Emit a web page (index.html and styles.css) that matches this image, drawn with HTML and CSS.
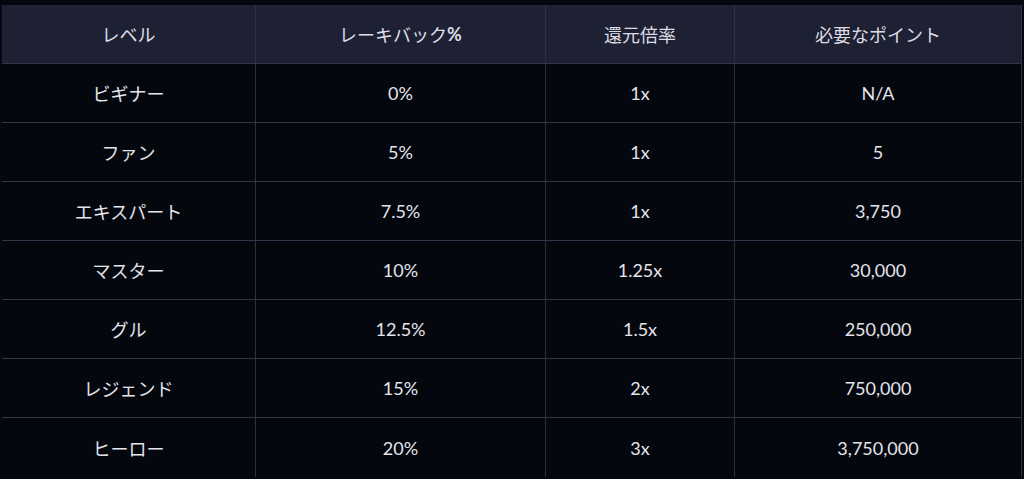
FILE: index.html
```html
<!DOCTYPE html>
<html lang="ja">
<head>
<meta charset="utf-8">
<link rel="stylesheet" href="styles.css">
</head>
<body>
<div class="table">
  <div class="row head">
    <div class="cell">レベル</div>
    <div class="cell">レーキバック<b class="pct">%</b></div>
    <div class="cell">還元倍率</div>
    <div class="cell">必要なポイント</div>
  </div>
  <div class="row">
    <div class="cell">ビギナー</div>
    <div class="cell">0%</div>
    <div class="cell">1x</div>
    <div class="cell">N/A</div>
  </div>
  <div class="row">
    <div class="cell">ファン</div>
    <div class="cell">5%</div>
    <div class="cell">1x</div>
    <div class="cell">5</div>
  </div>
  <div class="row">
    <div class="cell">エキスパート</div>
    <div class="cell">7.5%</div>
    <div class="cell">1x</div>
    <div class="cell">3,750</div>
  </div>
  <div class="row">
    <div class="cell">マスター</div>
    <div class="cell">10%</div>
    <div class="cell">1.25x</div>
    <div class="cell">30,000</div>
  </div>
  <div class="row">
    <div class="cell">グル</div>
    <div class="cell">12.5%</div>
    <div class="cell">1.5x</div>
    <div class="cell">250,000</div>
  </div>
  <div class="row">
    <div class="cell">レジェンド</div>
    <div class="cell">15%</div>
    <div class="cell">2x</div>
    <div class="cell">750,000</div>
  </div>
  <div class="row last">
    <div class="cell">ヒーロー</div>
    <div class="cell">20%</div>
    <div class="cell">3x</div>
    <div class="cell">3,750,000</div>
  </div>
</div>
</body>
</html>
```
FILE: styles.css
```css
html, body {
  margin: 0;
  padding: 0;
  background: #04070e;
}
body {
  padding: 5px 0 0 2px;
  font-family: "Lato", "Noto Sans CJK JP", sans-serif;
  font-size: 18px;
  color: #e4e4ea;
}
.table {
  width: 1020px;
  display: flex;
  flex-direction: column;
}
.row {
  display: grid;
  grid-template-columns: 254px 290px 189px 287px;
  height: 59px;
  border-bottom: 1px solid #33354a;
  box-sizing: border-box;
}
.row.last {
  border-bottom: none;
}
.row.head {
  background: #1e2033;
  color: #dcdce4;
}
.pct {
  font-weight: 700;
}
.cell {
  display: flex;
  align-items: center;
  justify-content: center;
  border-right: 1px solid #2c2e42;
  box-sizing: border-box;
}
```
